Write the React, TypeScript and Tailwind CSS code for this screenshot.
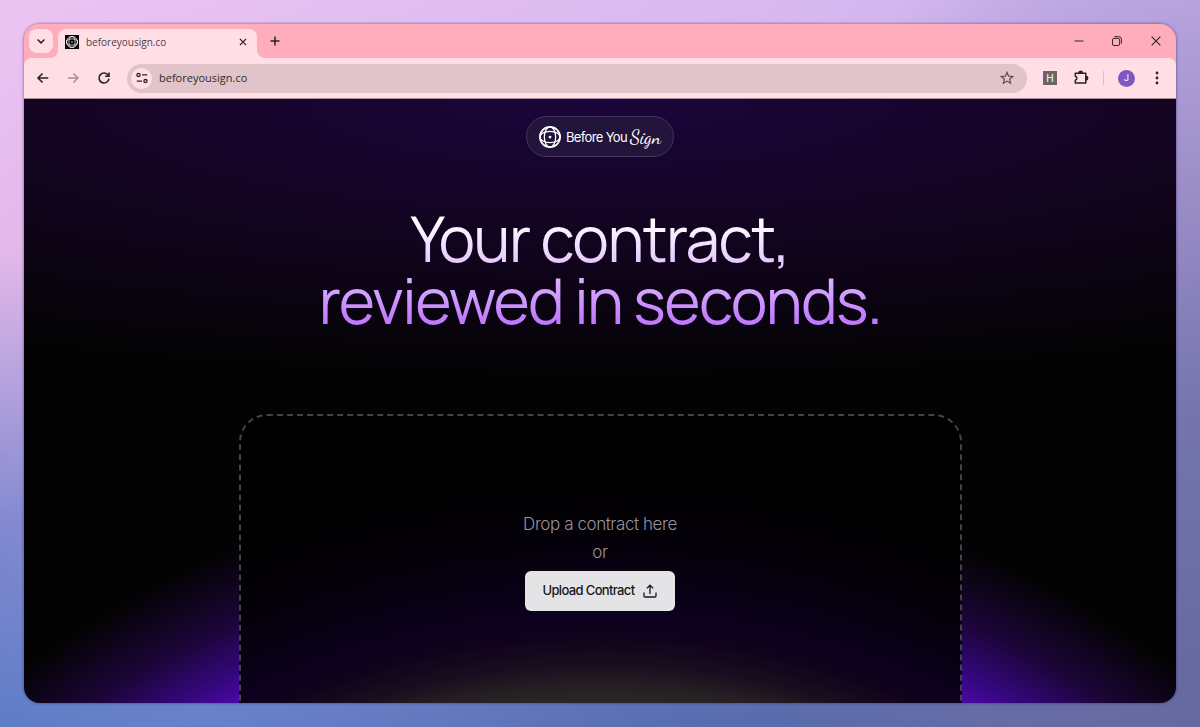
import type { ReactNode } from 'react';

// One big circle sits below the fold; only its upper arc shows behind the drop zone.
const PAGE_BG =
  'bg-[radial-gradient(circle_951px_at_50%_calc(100%+722px),#fff2d0_75%,#c8a0c0_78%,#8a4ea8_80%,#5c0c98_83%,#4a08a4_85%,#33077a_88%,#1b0536_93%,transparent_100%),radial-gradient(ellipse_110%_280px_at_50%_0px,#1c053c_0%,#12041f_50%,transparent_100%)]';

const WALLPAPER =
  'bg-[radial-gradient(ellipse_45%_120%_at_100%_100%,#66699f_0%,#66699fcc_35%,transparent_100%),radial-gradient(ellipse_50%_30%_at_65%_105%,#4a64a8_0%,transparent_100%),linear-gradient(to_right,transparent_0%,#b7a6ec99_100%),linear-gradient(to_bottom,#ecc4f2_0%,#e3b8e9_35%,#8289d0_72%,#5d7dc6_100%)]';

/** 16px line icon used across the browser chrome. */
function LineIcon({ children, size = 16, width = 1.5 }: { children: ReactNode; size?: number; width?: number }) {
  return (
    <svg
      width={size}
      height={size}
      viewBox="0 0 16 16"
      fill="none"
      stroke="currentColor"
      strokeWidth={width}
      aria-hidden="true"
    >
      {children}
    </svg>
  );
}

function GlobeMark({ size }: { size: number }) {
  return (
    <svg width={size} height={size} viewBox="0 0 24 24" fill="none" stroke="currentColor" aria-hidden="true">
      <circle cx="12" cy="12" r="11" strokeWidth="1.9" />
      <ellipse cx="12" cy="12" rx="6.2" ry="11" strokeWidth="1.4" />
      <ellipse cx="12" cy="12" rx="11" ry="6.2" strokeWidth="1.4" />
      <circle cx="12" cy="12" r="1.5" fill="currentColor" stroke="none" />
    </svg>
  );
}

function TabStrip() {
  return (
    <div className="flex h-[34px] items-end bg-[#ffadbc] pl-1 text-[#2b2226]">
      <button
        type="button"
        aria-label="Search tabs"
        className="mb-[5px] ml-px flex size-6 items-center justify-center rounded-lg bg-[#ffdfe5]"
      >
        <LineIcon size={12} width={2}>
          <path d="M3.5 6 8 10.5 12.5 6" />
        </LineIcon>
      </button>
      <div className="relative ml-[5px] flex h-[29px] w-[199px] items-center rounded-t-lg bg-[#ffdfe5] pr-2 pb-1 pl-[7px]">
        <svg className="absolute bottom-0 -left-2" width="8" height="8" viewBox="0 0 8 8" aria-hidden="true">
          <path d="M8 0v8H0a8 8 0 0 0 8-8" fill="#ffdfe5" />
        </svg>
        <svg className="absolute -right-2 bottom-0" width="8" height="8" viewBox="0 0 8 8" aria-hidden="true">
          <path d="M0 0v8h8a8 8 0 0 1-8-8" fill="#ffdfe5" />
        </svg>
        <span className="flex size-[14px] items-center justify-center bg-black text-white">
          <GlobeMark size={12} />
        </span>
        <span className="ml-[7px] flex-1 font-['Open_Sans',sans-serif] text-[10px] leading-4 text-[#4d4146]">
          beforeyousign.co
        </span>
        <button type="button" aria-label="Close tab" className="flex size-3 items-center justify-center">
          <LineIcon size={10} width={2}>
            <path d="m3 3 10 10M13 3 3 13" />
          </LineIcon>
        </button>
      </div>
      <button type="button" aria-label="New tab" className="mb-[11px] ml-3">
        <LineIcon size={12} width={2}>
          <path d="M8 2v12M2 8h12" />
        </LineIcon>
      </button>
      <div className="mb-[10px] ml-auto flex items-center gap-[26px] pr-[13px]">
        <button type="button" aria-label="Minimize">
          <LineIcon size={12} width={1.3}>
            <path d="M2 8h12" />
          </LineIcon>
        </button>
        <button type="button" aria-label="Restore">
          <LineIcon size={12} width={1.3}>
            <rect x="2" y="4.5" width="9.5" height="9.5" rx="2" />
            <path d="M4.5 2.2h6a3.3 3.3 0 0 1 3.3 3.3v6" />
          </LineIcon>
        </button>
        <button type="button" aria-label="Close window">
          <LineIcon size={14} width={1.3}>
            <path d="m3 3 10 10M13 3 3 13" />
          </LineIcon>
        </button>
      </div>
    </div>
  );
}

function AddressBar() {
  return (
    <div className="bg-[#ffadbc]">
      <div className="flex h-[41px] items-center rounded-t-lg border-b border-[#a6909a] bg-[#ffdfe5] pr-3 pl-3 text-[#2b2226]">
        <button type="button" aria-label="Back">
          <LineIcon size={14} width={1.8}>
            <path d="M14 8H2.5M7.5 2.8 2.3 8l5.2 5.2" />
          </LineIcon>
        </button>
        <button type="button" aria-label="Forward" className="ml-4 text-[#a38e95]">
          <LineIcon size={14} width={1.6}>
            <path d="M2 8h11.5M8.5 2.8 13.7 8l-5.2 5.2" />
          </LineIcon>
        </button>
        <button type="button" aria-label="Reload" className="ml-4">
          <LineIcon size={16} width={1.6}>
            <path d="M12.4 5.6A5 5 0 1 0 13 8.6" />
            <path d="M13 2.4v3.8H9.2" />
          </LineIcon>
        </button>
        <div className="ml-[15px] flex h-[29px] flex-1 items-center rounded-full bg-[#e0c4c9] pr-3 pl-1">
          <button
            type="button"
            aria-label="Site information"
            className="flex size-[21px] items-center justify-center rounded-full bg-[#ffdfe5]"
          >
            <LineIcon size={14} width={1.5}>
              <circle cx="4" cy="4.5" r="1.8" />
              <path d="M8 4.5h6M2 11.5h6" />
              <circle cx="12" cy="11.5" r="1.8" />
            </LineIcon>
          </button>
          <input
            type="text"
            aria-label="Address"
            defaultValue="beforeyousign.co"
            className="ml-[7px] min-w-0 flex-1 bg-transparent font-['Open_Sans',sans-serif] text-[11px] leading-5 text-[#33292d] outline-none"
          />
          <button type="button" aria-label="Bookmark" className="text-[#5c5055]">
            <LineIcon size={16} width={1.2}>
              <path d="m8 2.3 1.6 3.9 4.2.3-3.2 2.7 1 4.1L8 11.1l-3.6 2.2 1-4.1-3.2-2.7 4.2-.3z" />
            </LineIcon>
          </button>
        </div>
        <span className="ml-4 flex size-[14px] items-center justify-center bg-[#6a6668] font-['Inter',sans-serif] text-[10px] leading-none text-white">
          H
        </span>
        <button type="button" aria-label="Extensions" className="ml-4">
          <LineIcon size={16} width={1.5}>
            <path
              d="M2.3 3.2h10.5v9.9H2.3v-2.9a2 2 0 0 0 0-3.9z"
              strokeLinejoin="round"
            />
            <path d="M6 3a1.7 1.7 0 0 1 3.4 0zM13 6.5a1.7 1.7 0 0 1 0 3.4z" fill="currentColor" />
          </LineIcon>
        </button>
        <span className="ml-[14px] h-[14px] w-px bg-[#ffadbc]" />
        <button
          type="button"
          aria-label="Profile"
          className="ml-[14px] flex size-[17px] items-center justify-center rounded-full bg-[#7e57c2] font-['Roboto',sans-serif] text-[9px] leading-none text-white"
        >
          J
        </button>
        <button type="button" aria-label="Menu" className="ml-[15px]">
          <svg width="14" height="14" viewBox="0 0 14 14" fill="currentColor" aria-hidden="true">
            <circle cx="7" cy="2" r="1.4" />
            <circle cx="7" cy="7" r="1.4" />
            <circle cx="7" cy="12" r="1.4" />
          </svg>
        </button>
      </div>
    </div>
  );
}

function LogoPill() {
  return (
    <a
      href="#"
      className="flex h-[41px] items-center rounded-full border border-[#45345c] bg-[#23143c] px-3 text-white"
    >
      <GlobeMark size={22} />
      <span className="ml-[5px] font-['Inter',sans-serif] text-[13px] leading-5 tracking-tighter">Before You</span>
      <span className="ml-[3px] font-['Dancing_Script','Great_Vibes',cursive] text-[19px] leading-5">Sign</span>
    </a>
  );
}

function DropZone() {
  return (
    <section
      aria-label="Contract upload"
      className="mx-auto flex w-full max-w-[723px] flex-1 flex-col items-center rounded-t-[28px] border-2 border-b-0 border-dashed border-[#444448] bg-black/82 pt-[94px]"
    >
      <p className="text-center text-[17px] leading-7 font-light tracking-tight text-[#96949c]">
        Drop a contract here
        <br />
        or
      </p>
      <button
        type="button"
        className="mt-[5px] flex h-10 items-center gap-2 rounded-md bg-[#e4e4e7] pr-[17px] pl-[18px] text-[13px] font-medium tracking-tighter text-[#18181b]"
      >
        Upload Contract
        <LineIcon size={16} width={1.3}>
          <path d="M8 11V2.5M4.8 5.4 8 2.2l3.2 3.2M2 9.5V13a1 1 0 0 0 1 1h10a1 1 0 0 0 1-1V9.5" />
        </LineIcon>
      </button>
    </section>
  );
}

export default function App() {
  return (
    <div className={`flex min-h-screen p-6 ${WALLPAPER}`}>
      <div className="flex flex-1 flex-col overflow-hidden rounded-2xl shadow-[0_0_3px_rgba(50,30,90,0.7)]">
        <header>
          <TabStrip />
          <AddressBar />
        </header>
        <main className={`flex flex-1 flex-col items-center bg-[#030303] px-6 pt-[17px] font-['Inter',sans-serif] ${PAGE_BG}`}>
          <LogoPill />
          <h1 className="mt-[51px] mb-[82px] bg-linear-to-b from-white from-10% to-[#c27aff] to-90% bg-clip-text text-center font-['Manrope','Inter',sans-serif] text-[62px] leading-[62px] font-normal tracking-tight text-transparent">
            Your contract,
            <br />
            reviewed in seconds.
          </h1>
          <DropZone />
        </main>
      </div>
    </div>
  );
}
